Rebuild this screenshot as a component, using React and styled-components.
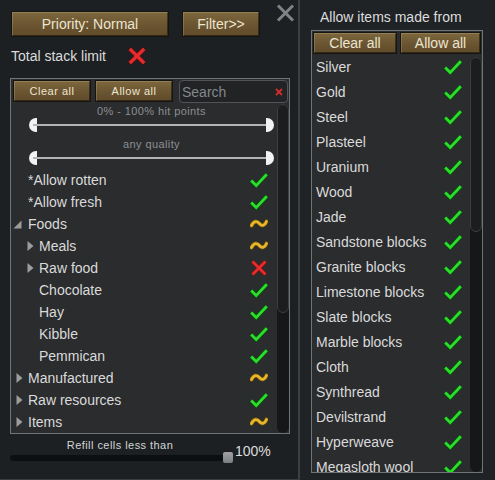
import React from 'react';
import styled, { createGlobalStyle } from 'styled-components';

const Global = createGlobalStyle`
  html, body { margin: 0; padding: 0; background: #1d2023; }
  body { font-family: "Liberation Sans", Arial, sans-serif; }
  * { box-sizing: border-box; }
`;

const Screen = styled.div`
  width: 495px;
  height: 480px;
  display: flex;
  overflow: hidden;
  background: #1d2023;
  color: #dcdcdc;
`;

const LeftPanel = styled.div`
  width: 300px;
  flex-shrink: 0;
  display: flex;
  flex-direction: column;
  border-right: 2px solid #3d4043;
  border-bottom: 1px solid #3a3d40;
`;

const TopBar = styled.div`
  display: flex;
  align-items: flex-start;
  padding: 4px 0 0 11px;
`;

const Button = styled.button`
  width: ${p => p.$w}px;
  height: ${p => p.$h}px;
  margin: ${p => p.$m || '0'};
  flex-shrink: 0;
  padding: 0;
  border: 1px solid #151410;
  background: linear-gradient(#7d673d, #6b5531 55%, #5f4a2a);
  box-shadow: inset 1px 1px 0 rgba(255, 240, 200, 0.18), inset -1px -1px 0 rgba(0, 0, 0, 0.45);
  color: #ece5d1;
  font-family: "Liberation Sans", Arial, sans-serif;
  font-size: ${p => p.$fs || 14}px;
  letter-spacing: ${p => p.$ls || 0}px;
  line-height: 1;
  cursor: pointer;
`;

const CloseButton = styled.div`
  margin-left: auto;
  margin-right: 3px;
  width: 19px;
  height: 18px;
  display: flex;
`;

const StackRow = styled.div`
  height: 23px;
  margin-top: 7px;
  padding-left: 11px;
  display: flex;
  align-items: center;
  font-size: 14px;
`;

const StackX = styled.div`
  margin-left: 21px;
  display: flex;
`;

const FilterBox = styled.div`
  margin: 11px 0 0 10px;
  width: 280px;
  height: 356px;
  border: 1px solid #717477;
  background: #2a2c2e;
  display: flex;
  flex-direction: column;
`;

const BoxHeader = styled.div`
  display: flex;
  gap: ${p => p.$gap}px;
  padding: 1px ${p => p.$pr || 0}px 0 ${p => p.$pl}px;
  flex-shrink: 0;
`;

const SearchBox = styled.div`
  width: 109px;
  height: 23px;
  margin-left: 2px;
  border: 1px solid #505357;
  border-radius: 4px;
  background: #212325;
  display: flex;
  align-items: center;
  padding: 0 4px 0 2px;
  color: #85888b;
  font-size: 14px;
  justify-content: space-between;
`;

const BoxBody = styled.div`
  flex: 1;
  min-height: 0;
  display: flex;
`;

const Content = styled.div`
  flex: 1;
  min-width: 0;
  overflow: hidden;
  display: flex;
  flex-direction: column;
`;

const Scrollbar = styled.div`
  width: ${p => p.$w}px;
  flex-shrink: 0;
  margin-top: ${p => p.$mt}px;
  background: #161719;
  border-radius: 6px;
  display: flex;
  flex-direction: column;
`;

const Thumb = styled.div`
  height: ${p => p.$h}px;
  border: 1px solid #3c3f42;
  border-radius: 6px;
  background: #1c1d1f;
`;

const SliderBlock = styled.div`
  margin: ${p => p.$mt}px 3px 0 18px;
  display: flex;
  flex-direction: column;
`;

const SliderLabel = styled.div`
  height: 14px;
  line-height: 14px;
  text-align: center;
  font-size: 11px;
  letter-spacing: 0.4px;
  color: #8d8f91;
`;

const RangeSlider = styled.div`
  height: 14px;
  display: flex;
  align-items: center;
`;

const Handle = styled.div`
  width: 8px;
  height: 14px;
  background: #f2f2f2;
  border-radius: ${p => (p.$side === 'left' ? '7px 0 0 7px' : '0 7px 7px 0')};
  flex-shrink: 0;
`;

const RangeLine = styled.div`
  flex: 1;
  height: 2px;
  margin: 0 -4px;
  background: #b4b4b4;
`;

const Row = styled.div`
  height: ${p => p.$h}px;
  flex-shrink: 0;
  display: flex;
  align-items: center;
  padding-left: ${p => p.$pl}px;
  padding-right: ${p => p.$pr}px;
  font-size: 14px;
  color: #dadada;
  white-space: nowrap;
`;

const ArrowSlot = styled.div`
  width: 12px;
  flex-shrink: 0;
  display: flex;
  align-items: center;
`;

const Label = styled.span`
  flex: 1;
  min-width: 0;
`;

const IconSlot = styled.div`
  width: 18px;
  height: 18px;
  flex-shrink: 0;
  display: flex;
`;

const BottomBar = styled.div`
  display: flex;
  padding-left: 10px;
  margin-top: 4px;
`;

const RefillColumn = styled.div`
  width: 223px;
  display: flex;
  flex-direction: column;
`;

const RefillLabel = styled.div`
  height: 14px;
  line-height: 14px;
  text-align: center;
  font-size: 11px;
  letter-spacing: 0.45px;
  color: #d4d4d4;
  padding-right: 3px;
`;

const TrackRow = styled.div`
  height: 11px;
  display: flex;
  align-items: center;
`;

const Track = styled.div`
  flex: 1;
  height: 6px;
  border-radius: 3px;
  background: #0d0e0f;
`;

const TrackHandle = styled.div`
  width: 10px;
  height: 11px;
  margin-left: -7px;
  border-radius: 2px;
  background: linear-gradient(#a1a2a4, #7d7e80);
`;

const Percent = styled.div`
  margin-left: 2px;
  align-self: center;
  font-size: 14px;
  color: #dcdcdc;
`;

const RightPanel = styled.div`
  flex: 1;
  display: flex;
  flex-direction: column;
  background: #202326;
`;

const Title = styled.div`
  padding: 10px 0 0 20px;
  line-height: 14px;
  font-size: 14px;
  color: #dcdcdc;
`;

const ListBox = styled.div`
  margin: 6px 0 0 11px;
  width: 172px;
  height: 443px;
  border: 1px solid #717477;
  background: #2a2c2e;
  display: flex;
  flex-direction: column;
`;

/* ---------- icons ---------- */

const Check = () => (
  <svg width="18" height="18" viewBox="0 0 18 18">
    <path d="M1.2 9.6 L6.2 14.6 L16.8 3.2" fill="none" stroke="#0c4d0c" strokeWidth="4.4" />
    <path d="M1.2 9.6 L6.2 14.6 L16.8 3.2" fill="none" stroke="#2ddd2d" strokeWidth="2.8" />
  </svg>
);

const Partial = () => (
  <svg width="18" height="18" viewBox="0 0 18 18">
    <path d="M1.5 10.5 C4 5.5 7 5.8 9.3 8.5 C11.6 11.2 14.5 11.2 16.5 6.5" fill="none" stroke="#6b4e0a" strokeWidth="4.2" strokeLinecap="round" />
    <path d="M1.5 10.5 C4 5.5 7 5.8 9.3 8.5 C11.6 11.2 14.5 11.2 16.5 6.5" fill="none" stroke="#e8b62a" strokeWidth="2.8" strokeLinecap="round" />
  </svg>
);

const Cross = ({ size = 18 }) => (
  <svg width={size} height={size} viewBox="0 0 18 18">
    <path d="M2.5 2.5 L15.5 15.5 M15.5 2.5 L2.5 15.5" fill="none" stroke="#6e1010" strokeWidth="4.2" />
    <path d="M2.5 2.5 L15.5 15.5 M15.5 2.5 L2.5 15.5" fill="none" stroke="#e52d2d" strokeWidth="2.8" />
  </svg>
);

const CloseIcon = () => (
  <svg width="19" height="18" viewBox="0 0 19 18">
    <path d="M2 1.5 L17 16.5 M17 1.5 L2 16.5" fill="none" stroke="#808386" strokeWidth="3" />
  </svg>
);

const SmallX = () => (
  <svg width="8" height="8" viewBox="0 0 8 8">
    <path d="M1 1 L7 7 M7 1 L1 7" fill="none" stroke="#d62b2b" strokeWidth="1.8" />
  </svg>
);

const ArrowRight = () => (
  <svg width="7" height="10" viewBox="0 0 7 10">
    <polygon points="0.5,0 6.5,5 0.5,10" fill="#9c9c9c" />
  </svg>
);

const ArrowDown = () => (
  <svg width="9" height="9" viewBox="0 0 9 9" style={{ marginLeft: -3 }}>
    <polygon points="8.5,0.5 8.5,8.5 0.5,8.5" fill="#9c9c9c" />
  </svg>
);

const stateIcon = s => (s === 'check' ? <Check /> : s === 'partial' ? <Partial /> : <Cross />);

/* ---------- data ---------- */

const tree = [
  { label: '*Allow rotten', depth: 0, state: 'check' },
  { label: '*Allow fresh', depth: 0, state: 'check' },
  { label: 'Foods', depth: 0, arrow: 'open', state: 'partial' },
  { label: 'Meals', depth: 1, arrow: 'closed', state: 'partial' },
  { label: 'Raw food', depth: 1, arrow: 'closed', state: 'none' },
  { label: 'Chocolate', depth: 1, state: 'check' },
  { label: 'Hay', depth: 1, state: 'check' },
  { label: 'Kibble', depth: 1, state: 'check' },
  { label: 'Pemmican', depth: 1, state: 'check' },
  { label: 'Manufactured', depth: 0, arrow: 'closed', state: 'partial' },
  { label: 'Raw resources', depth: 0, arrow: 'closed', state: 'check' },
  { label: 'Items', depth: 0, arrow: 'closed', state: 'partial' },
];

const materials = [
  'Silver', 'Gold', 'Steel', 'Plasteel', 'Uranium', 'Wood', 'Jade',
  'Sandstone blocks', 'Granite blocks', 'Limestone blocks', 'Slate blocks',
  'Marble blocks', 'Cloth', 'Synthread', 'Devilstrand', 'Hyperweave', 'Megasloth wool',
];

export default function App() {
  return (
    <>
      <Global />
      <Screen>
        <LeftPanel>
          <TopBar>
            <Button $w={158} $h={26} $m="7px 0 0 0">Priority: Normal</Button>
            <Button $w={78} $h={26} $m="7px 0 0 13px">Filter&gt;&gt;</Button>
            <CloseButton><CloseIcon /></CloseButton>
          </TopBar>
          <StackRow>
            Total stack limit
            <StackX><Cross size={20} /></StackX>
          </StackRow>
          <FilterBox>
            <BoxHeader $gap={4} $pl={2}>
              <Button $w={78} $h={22} $fs={11} $ls={0.5}>Clear all</Button>
              <Button $w={78} $h={22} $fs={11} $ls={0.5}>Allow all</Button>
              <SearchBox>
                <span>Search</span>
                <SmallX />
              </SearchBox>
            </BoxHeader>
            <BoxBody>
              <Content>
                <SliderBlock $mt={1}>
                  <SliderLabel>0% - 100% hit points</SliderLabel>
                  <RangeSlider>
                    <Handle $side="left" />
                    <RangeLine />
                    <Handle $side="right" />
                  </RangeSlider>
                </SliderBlock>
                <SliderBlock $mt={5}>
                  <SliderLabel>any quality</SliderLabel>
                  <RangeSlider>
                    <Handle $side="left" />
                    <RangeLine />
                    <Handle $side="right" />
                  </RangeSlider>
                </SliderBlock>
                <div style={{ height: 4, flexShrink: 0 }} />
                {tree.map(item => (
                  <Row key={item.label} $h={22} $pl={5 + 11 * item.depth} $pr={9}>
                    <ArrowSlot>
                      {item.arrow === 'open' && <ArrowDown />}
                      {item.arrow === 'closed' && <ArrowRight />}
                    </ArrowSlot>
                    <Label>{item.label}</Label>
                    <IconSlot>{stateIcon(item.state)}</IconSlot>
                  </Row>
                ))}
              </Content>
              <Scrollbar $w={12} $mt={1}>
                <Thumb $h={209} />
              </Scrollbar>
            </BoxBody>
          </FilterBox>
          <BottomBar>
            <RefillColumn>
              <RefillLabel>Refill cells less than</RefillLabel>
              <TrackRow>
                <Track />
                <TrackHandle />
              </TrackRow>
            </RefillColumn>
            <Percent>100%</Percent>
          </BottomBar>
        </LeftPanel>

        <RightPanel>
          <Title>Allow items made from</Title>
          <ListBox>
            <BoxHeader $gap={3} $pl={1} $pr={1}>
              <Button $w={84} $h={22}>Clear all</Button>
              <Button $w={81} $h={22}>Allow all</Button>
            </BoxHeader>
            <BoxBody>
              <Content>
                {materials.map(m => (
                  <Row key={m} $h={25} $pl={4} $pr={8}>
                    <Label>{m}</Label>
                    <IconSlot><Check /></IconSlot>
                  </Row>
                ))}
              </Content>
              <Scrollbar $w={12} $mt={3}>
                <Thumb $h={175} />
              </Scrollbar>
            </BoxBody>
          </ListBox>
        </RightPanel>
      </Screen>
    </>
  );
}
